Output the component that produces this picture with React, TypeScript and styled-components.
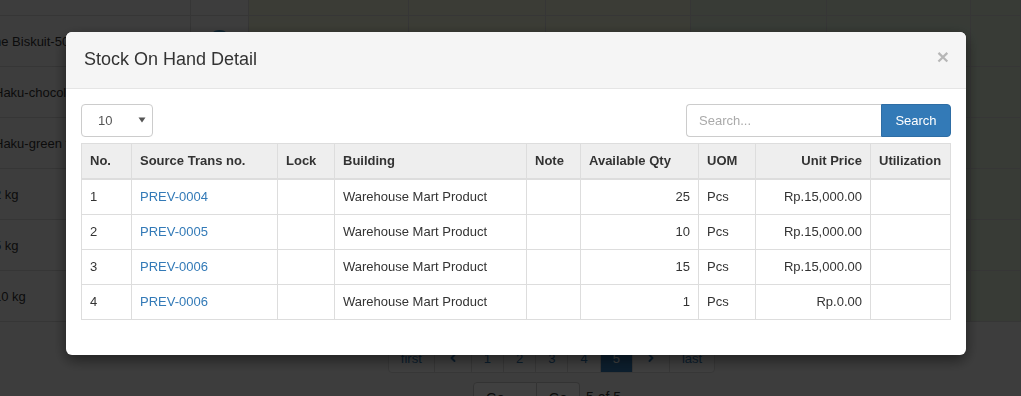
import React from 'react'
import styled, { createGlobalStyle } from 'styled-components'
import { ChevronLeft, ChevronRight } from 'lucide-react'

const GlobalStyle = createGlobalStyle`
  html, body {
    margin: 0;
    padding: 0;
  }
  body {
    font-family: 'Liberation Sans', Arial, sans-serif;
    font-size: 13px;
    color: #333;
    overflow: hidden;
    background: #f4f4f4;
  }
  * {
    box-sizing: border-box;
  }
`

type Tone = 'gray' | 'olive' | 'green'

const toneColor: Record<Tone, string> = {
  gray: '#f4f4f4',
  olive: '#ecf0d6',
  green: '#deecd8',
}

const columnTones: Tone[] = ['gray', 'gray', 'olive', 'olive', 'olive', 'green', 'green', 'green']

const products = ['ne Biskuit-50 gr', 'Haku-chocolate', 'Haku-green tea', '2 kg', '5 kg', '10 kg']

const stock = [
  { no: 1, trans: 'PREV-0004', building: 'Warehouse Mart Product', qty: 25, uom: 'Pcs', price: 'Rp.15,000.00' },
  { no: 2, trans: 'PREV-0005', building: 'Warehouse Mart Product', qty: 10, uom: 'Pcs', price: 'Rp.15,000.00' },
  { no: 3, trans: 'PREV-0006', building: 'Warehouse Mart Product', qty: 15, uom: 'Pcs', price: 'Rp.15,000.00' },
  { no: 4, trans: 'PREV-0006', building: 'Warehouse Mart Product', qty: 1, uom: 'Pcs', price: 'Rp.0.00' },
]

const pages = ['first', 'prev', '1', '2', '3', '4', '5', 'next', 'last']

const Page = styled.div`
  width: 1021px;
  height: 396px;
  overflow: hidden;
  background: #f4f4f4;
`

const BgRow = styled.div<{ $h: number }>`
  display: grid;
  grid-template-columns: 191px 58px 160px 137px 145px 136px 144px 1fr;
  height: ${(p) => p.$h}px;
`

const BgCell = styled.div<{ $tone: Tone }>`
  display: flex;
  align-items: center;
  justify-content: flex-start;
  background: ${(p) => toneColor[p.$tone]};
  border-right: 1px solid #d6d6d6;
  border-bottom: 1px solid #d6d6d6;
  white-space: nowrap;
  font-size: 13px;
  color: #333;
`

const ProductName = styled.span`
  margin-left: -6px;
`

const Avatar = styled.span`
  width: 23px;
  height: 23px;
  border-radius: 50%;
  background: #3c8dbc;
  margin: 0 auto;
`

const Pager = styled.div`
  display: flex;
  justify-content: center;
  padding-left: 83px;
  margin-top: 21px;
`

const PageItem = styled.span<{ $active?: boolean }>`
  display: flex;
  align-items: center;
  justify-content: center;
  height: 30px;
  padding: 0 12px;
  min-width: 33px;
  border: 1px solid #ddd;
  margin-left: -1px;
  background: ${(p) => (p.$active ? '#337ab7' : '#fff')};
  color: ${(p) => (p.$active ? '#fff' : '#337ab7')};
  font-size: 13px;
  &:first-child {
    border-radius: 4px 0 0 4px;
  }
  &:last-child {
    border-radius: 0 4px 4px 0;
  }
`

const GotoRow = styled.div`
  display: flex;
  justify-content: center;
  align-items: flex-start;
  padding-left: 73px;
  margin-top: 9px;
  font-size: 14px;
`

const GotoInput = styled.span`
  width: 64px;
  height: 30px;
  border: 1px solid #ccc;
  border-radius: 4px 0 0 4px;
  background: #fff;
  padding: 7px 12px;
`

const GotoButton = styled.span`
  width: 43px;
  height: 30px;
  border: 1px solid #ccc;
  border-left: none;
  border-radius: 0 4px 4px 0;
  background: #fff;
  text-align: center;
  padding-top: 7px;
`

const GotoText = styled.span`
  margin-left: 6px;
  padding-top: 7px;
`

const Backdrop = styled.div`
  position: fixed;
  inset: 0;
  background: rgba(0, 0, 0, 0.75);
`

const Dialog = styled.div`
  width: 900px;
  margin: 32px 0 0 66px;
  background: #fff;
  border-radius: 6px;
  box-shadow: 0 5px 15px rgba(0, 0, 0, 0.5);
`

const Header = styled.div`
  display: flex;
  justify-content: space-between;
  align-items: flex-start;
  padding: 15px 17px 15px 18px;
  background: #f5f5f5;
  border-bottom: 1px solid #e5e5e5;
  border-radius: 6px 6px 0 0;
`

const Title = styled.h4`
  margin: 0;
  font-size: 18px;
  font-weight: 400;
  line-height: 1.42857;
  color: #333;
`

const Close = styled.span`
  font-size: 21px;
  font-weight: 700;
  line-height: 1;
  color: #000;
  opacity: 0.25;
  margin-top: -1px;
`

const Body = styled.div`
  padding: 15px;
`

const Toolbar = styled.div`
  display: flex;
  justify-content: space-between;
  align-items: center;
`

const Select = styled.div`
  display: flex;
  align-items: center;
  justify-content: space-between;
  width: 72px;
  height: 33px;
  padding: 0 6px 0 16px;
  border: 1px solid #ccc;
  border-radius: 4px;
  color: #555;
  font-size: 13px;
`

const SearchGroup = styled.div`
  display: flex;
  height: 33px;
`

const SearchInput = styled.div`
  width: 195px;
  border: 1px solid #ccc;
  border-right: none;
  border-radius: 4px 0 0 4px;
  padding: 0 12px;
  display: flex;
  align-items: center;
  color: #aaa;
  font-size: 13px;
`

const SearchButton = styled.div`
  width: 70px;
  background: #337ab7;
  border: 1px solid #2e6da4;
  border-radius: 0 4px 4px 0;
  color: #fff;
  display: flex;
  align-items: center;
  justify-content: center;
  font-size: 13px;
`

const Table = styled.table`
  width: 100%;
  margin: 6px 0 20px;
  border-collapse: collapse;
  table-layout: fixed;
  border: 1px solid #ddd;
`

const Th = styled.th<{ $right?: boolean }>`
  text-align: ${(p) => (p.$right ? 'right' : 'left')};
  padding: 8px;
  line-height: 18px;
  font-weight: 700;
  background: #eee;
  border: 1px solid #ddd;
  border-bottom-width: 2px;
  color: #333;
  white-space: nowrap;
`

const Td = styled.td<{ $right?: boolean }>`
  text-align: ${(p) => (p.$right ? 'right' : 'left')};
  padding: 8px;
  line-height: 18px;
  border: 1px solid #ddd;
  color: #333;
  white-space: nowrap;
`

const TransLink = styled.a`
  color: #337ab7;
  text-decoration: none;
`

const widths = [50, 146, 57, 192, 54, 118, 57, 115, 80]

function Background() {
  return (
    <Page>
      <BgRow $h={16}>
        {columnTones.map((t, i) => (
          <BgCell key={i} $tone={t} />
        ))}
      </BgRow>
      {products.map((name, r) => (
        <BgRow key={r} $h={51}>
          {columnTones.map((t, i) => (
            <BgCell key={i} $tone={t}>
              {i === 0 && <ProductName>{name}</ProductName>}
              {i === 1 && r === 0 && <Avatar />}
            </BgCell>
          ))}
        </BgRow>
      ))}
      <Pager>
        {pages.map((p) => (
          <PageItem key={p} $active={p === '5'}>
            {p === 'prev' ? (
              <ChevronLeft size={12} strokeWidth={4} />
            ) : p === 'next' ? (
              <ChevronRight size={12} strokeWidth={4} />
            ) : (
              p
            )}
          </PageItem>
        ))}
      </Pager>
      <GotoRow>
        <GotoInput>Go</GotoInput>
        <GotoButton>Go</GotoButton>
        <GotoText>5 of 5</GotoText>
      </GotoRow>
    </Page>
  )
}

export default function App() {
  return (
    <>
      <GlobalStyle />
      <Background />
      <Backdrop>
        <Dialog>
          <Header>
            <Title>Stock On Hand Detail</Title>
            <Close>×</Close>
          </Header>
          <Body>
            <Toolbar>
              <Select>
                <span>10</span>
                <svg width="8" height="6" viewBox="0 0 8 6">
                  <path d="M0.5 0.5 L7.5 0.5 L4 5.5 Z" fill="#555" />
                </svg>
              </Select>
              <SearchGroup>
                <SearchInput>Search...</SearchInput>
                <SearchButton>Search</SearchButton>
              </SearchGroup>
            </Toolbar>
            <Table>
              <colgroup>
                {widths.map((w, i) => (
                  <col key={i} style={{ width: w }} />
                ))}
              </colgroup>
              <thead>
                <tr>
                  <Th>No.</Th>
                  <Th>Source Trans no.</Th>
                  <Th>Lock</Th>
                  <Th>Building</Th>
                  <Th>Note</Th>
                  <Th>Available Qty</Th>
                  <Th>UOM</Th>
                  <Th $right>Unit Price</Th>
                  <Th>Utilization</Th>
                </tr>
              </thead>
              <tbody>
                {stock.map((s) => (
                  <tr key={s.no}>
                    <Td>{s.no}</Td>
                    <Td>
                      <TransLink href="#">{s.trans}</TransLink>
                    </Td>
                    <Td />
                    <Td>{s.building}</Td>
                    <Td />
                    <Td $right>{s.qty}</Td>
                    <Td>{s.uom}</Td>
                    <Td $right>{s.price}</Td>
                    <Td />
                  </tr>
                ))}
              </tbody>
            </Table>
          </Body>
        </Dialog>
      </Backdrop>
    </>
  )
}
